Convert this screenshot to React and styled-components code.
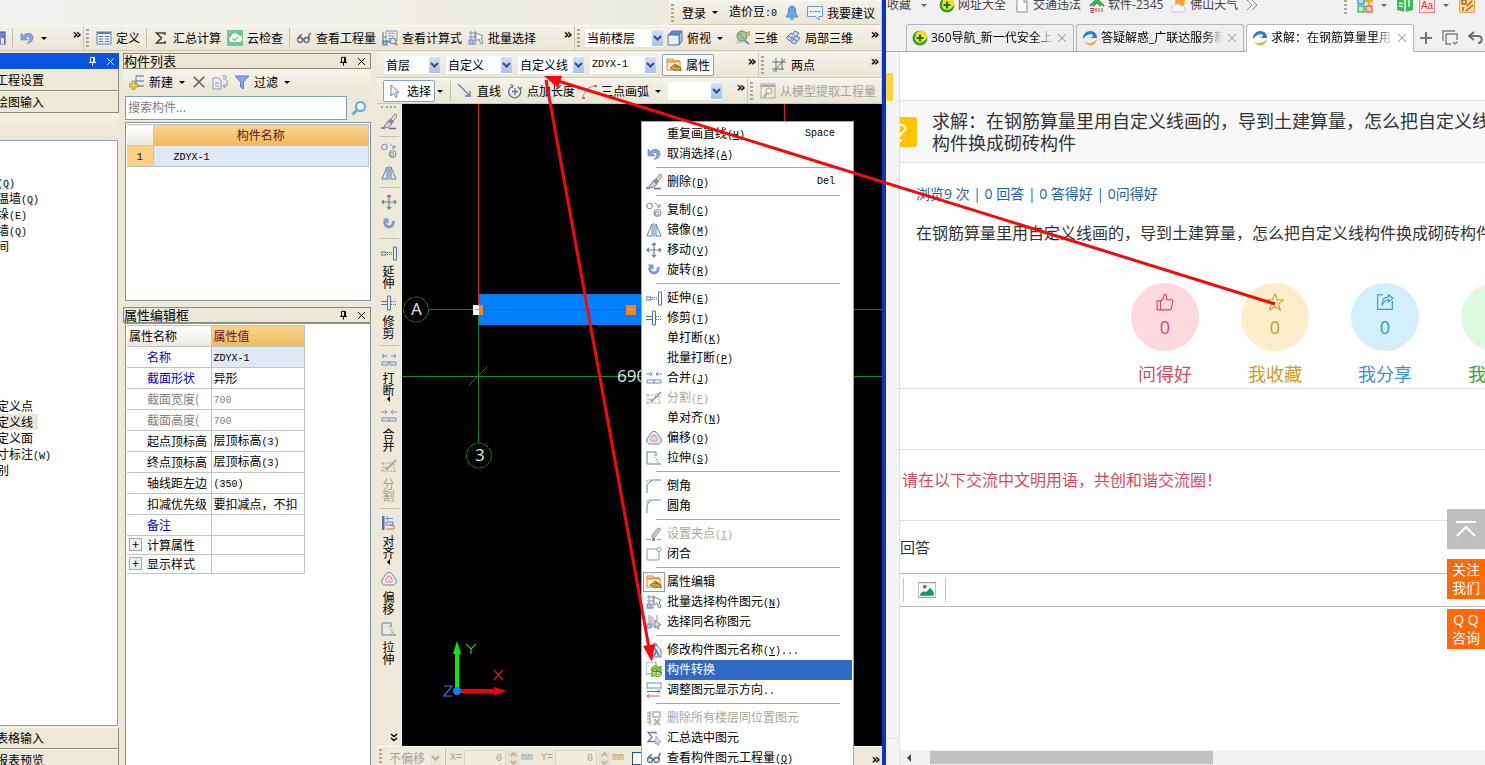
import { useState } from "react";
import styled, { createGlobalStyle } from "styled-components";

const GlobalStyle = createGlobalStyle`
  * {
    box-sizing: border-box;
  }

  body {
    margin: 0;
    overflow: hidden;
    font-family: "Noto Sans CJK SC", sans-serif;
    font-size: 12px;
    line-height: 16px;
    color: #000;
  }

  button, input, select {
    font: inherit;
    color: inherit;
    margin: 0;
    padding: 0;
    border: none;
    background: none;
    border-radius: 0;
  }
`;

const Desktop = styled.div`
  position: relative;
  display: flex;
  height: 100vh;
  overflow: hidden;
`;

// ---------- Icons (16 x 16) ----------
const blue = "#6f8fc6";
const steel = "#5a7199";

const icons = {
  save: (
    <>
      <rect x="1" y="2" width="13" height="12" fill="#7d83c9" stroke="#4d52a0" />
      <rect x="10" y="8" width="3" height="6" fill="#e4e6f7" />
    </>
  ),
  undo: (
    <path
      d="M2 3v7h7L6.600 7.600C9 5.600 11.500 7 10.500 10c-.4 1.400-1.300 2.300-2.500 3.400 4-.6 6.300-3 6.100-6C13.800 3.400 8.500 1.600 4.400 5.400z"
      fill="#86a3dc"
      stroke="#6482c0"
      strokeWidth=".6"
    />
  ),
  define: (
    <>
      <rect x="1" y="2" width="14" height="12" fill="#eef3fb" stroke="#5c7fb8" />
      <path d="M1 3h14" stroke="#5c7fb8" strokeWidth="2" />
      <path d="M3 6.500h4M3 9h4M3 11.500h4M9 6.500h4M9 9h4M9 11.500h4" stroke="#4a6ea9" />
    </>
  ),
  sigma: <path d="M12 5V3H3.500l5 5-5 5H12v-2" fill="none" stroke="#444" strokeWidth="1.600" />,
  cloud: (
    <>
      <rect width="16" height="16" fill="#72c795" />
      <path d="M4 12a3 3 0 0 1 0-5.500A4 4 0 0 1 11.500 5.500 3.200 3.200 0 0 1 12 12z" fill="#fff" />
      <path d="M5.500 8.500l2 2 3.500-3.500" fill="none" stroke="#72c795" strokeWidth="1.400" />
    </>
  ),
  glasses: (
    <g fill="none" stroke="#59687f" strokeWidth="1.300">
      <circle cx="4" cy="10" r="2.500" />
      <circle cx="10.500" cy="10" r="2.500" />
      <path d="M2 8.500C3 6 4 5 6 4.500M6.500 9.500h1.500M13 9.500V5l2-2" />
    </g>
  ),
  formula: (
    <>
      <path d="M4 1h11v10H4z" fill="#f1f1f1" stroke="#8a93a6" />
      <path d="M6 3.500h7M6 6h7M6 8.500h7M8 2v8M11 2v8" stroke="#9aa3b5" strokeDasharray="2 1" />
      <path d="M1 2v12M1 7h3M3 12h5" stroke={steel} />
      <rect x="1" y="11" width="4" height="4" fill="#a7b8e0" stroke={steel} />
      <circle cx="11" cy="11" r="3" fill="#dbe7f8" stroke={steel} />
      <path d="M13 13l2 2" stroke="#c27a3a" strokeWidth="2" />
    </>
  ),
  batch: (
    <>
      <path d="M1 3h8M1 7h8M1 11h5M3 1v13M7 1v13M1 14h7" stroke="#8793ad" fill="none" />
      <rect x="1" y="10" width="4" height="4" fill="#b5c2e6" stroke={blue} />
      <path d="M8 3l7 3-2 2 2 5-2 1-2-5-3 2z" fill="#fff" stroke="#7c86a0" />
    </>
  ),
  same: (
    <>
      <path d="M3 1v11M7 3v9M11 1v6M1 12h10" stroke="#8793ad" />
      <path d="M5 2v9" stroke="#d77" />
      <rect x="1" y="10" width="4" height="4" fill="#b5c2e6" stroke={blue} />
      <path d="M9 6l6 5-3 .4 1 3-1.500.6-1-3L9 14z" fill="#dfe4ef" stroke="#7c86a0" />
    </>
  ),
  cube: (
    <>
      <path d="M1 5l4-4h10l-3 4z" fill="#5d8cc9" stroke="#55779f" />
      <path d="M12 5l3-4v10l-3 4z" fill="#a9c8ea" stroke="#55779f" />
      <path d="M1 5h11v10H1z" fill="#e6f0fa" stroke="#55779f" />
    </>
  ),
  globe: (
    <>
      <path d="M1 14l4-6 5 5z" fill="#c9c9c9" />
      <circle cx="8" cy="6" r="5" fill="#8fcf9c" stroke="#4c9b60" />
      <path d="M5 3l5 6M11 3l4-1v4" stroke="#e08b4a" strokeWidth="1.500" fill="none" />
      <path d="M10 10l5 4" stroke="#7089b5" strokeWidth="2" />
    </>
  ),
  part3d: (
    <g fill="#c4d9ef" stroke="#57799f">
      <path d="M1 8l5-5 4 2-5 6zM6 12l5-6 4 2-5 6z" />
      <path d="M3 6l4 2M8 9l4 2M8 3l2-2 4 2-3 4" />
    </g>
  ),
  bell: (
    <>
      <path d="M8 1C5.500 1 4.500 3 4.500 6S3 10 2 12h12c-1-2-2.500-3-2.500-6S10.500 1 8 1z" fill="#6ba4e7" stroke="#4c82c4" />
      <path d="M6 13h4l-2 2.500z" fill="#4c82c4" />
    </>
  ),
  speech: (
    <>
      <path d="M.5 1.500h15v10H12v3.500L8.500 11.500h-8z" fill="#eaf2fc" stroke="#6d96cb" />
      <path d="M3 6.500h2M6 6.500h1M8 6.500h2M11 6.500h2" stroke="#4c7ab4" />
    </>
  ),
  props: (
    <>
      <path d="M1 2h6l1 2h6v9H1z" fill="#fff3d0" stroke="#d98a35" />
      <path d="M1 4.500h13" stroke="#e7963b" strokeWidth="2" />
      <path d="M4 11l5-4 2 1 4 3v3l-3-1-3 .5-2-1z" fill="#d5a93f" stroke="#715c28" strokeWidth=".8" />
      <path d="M8 10l3-1 2 2" stroke="#715c28" fill="none" />
    </>
  ),
  twoPoint: (
    <path d="M1 5h14M1 12h12M5 1v14M11 1v12M2 15L14 2" fill="none" stroke="#6b7280" />
  ),
  cursor: <path d="M4 2l8 7-3.500.5 2 4-1.800.8-2-4L4 13z" fill="#fff" stroke="#6c7fa8" />,
  line: <path d="M1 1l11 11M13 8v5H8" fill="none" stroke="#5c7fa8" strokeWidth="1.300" />,
  pointLen: (
    <g fill="none" stroke={steel} strokeWidth="1.300">
      <path d="M6 3a6 6 0 1 0 7 3M5 5L6 2.500 3.500 1.500M8 5v7M5 8.500h6M13 6l-2-2M13 6l2-2" />
    </g>
  ),
  arc: (
    <>
      <path d="M2 15C3 8 8 3 15 3" fill="none" stroke="#8b95aa" />
      <path d="M1 14h3v2H1zM5 6h3v2H5zM13 2h3v2h-3z" fill="#d46a6a" />
    </>
  ),
  model: (
    <g fill="none" stroke="#a8a698">
      <rect x="1" y="1" width="14" height="14" />
      <path d="M1 3h14" strokeWidth="2" />
      <circle cx="9" cy="8" r="3" />
      <path d="M7 10l-3 4" strokeWidth="2" />
    </g>
  ),
  eraser: (
    <>
      <path d="M10 5l4-5h1.500l.5 3-4 4z" fill="#e9e1a0" stroke="#6f6f7f" strokeWidth=".8" />
      <path d="M9 4.500l4 3-2 2.500-4-3z" fill="#7f8db0" />
      <path d="M7 7l4 3-4 4-4-1.500z" fill="#e3c6dc" stroke="#6f6f7f" strokeWidth=".8" />
      <path d="M0 14h4M8 14.500h7" stroke="#5d6b93" strokeWidth="1.300" />
    </>
  ),
  copy: (
    <g fill="none" stroke="#75839f">
      <circle cx="3.500" cy="4" r="2.800" />
      <circle cx="11.500" cy="11" r="3.500" />
      <circle cx="11" cy="11.500" r="1.800" />
      <path d="M9 1l5 4M14 2v3h-3" stroke={blue} />
    </g>
  ),
  mirror: <path d="M1 14L6 2v12zM8 1v14M15 14L10 2v12z" fill="none" stroke="#5b7cb2" />,
  move: (
    <path
      d="M8 1v14M1 8h14M6 3l2-2 2 2M6 13l2 2 2-2M3 6L1 8l2 2M13 6l2 2-2 2"
      fill="none"
      stroke="#6d7fa0"
      strokeWidth="1.200"
    />
  ),
  rotate: (
    <>
      <path d="M4 5a4.300 4.300 0 1 0 8 0" fill="none" stroke="#7b97d6" strokeWidth="3" />
      <path d="M1.500 2.500h6v5.500z" fill="#7b97d6" />
    </>
  ),
  extend: (
    <g fill="none" stroke="#4f75a8">
      <path d="M0 7h5v3H0zM12.500 2h3v13h-3z" />
      <path d="M6 7.500h6M6 9.500h6" strokeDasharray="1 1" />
    </g>
  ),
  trim: (
    <g fill="none" stroke="#4f75a8">
      <path d="M6.500 1h3v14h-3zM0 6.500h6M0 9.500h6" />
      <path d="M10 6.500h6M10 9.500h6" strokeDasharray="1 1" />
    </g>
  ),
  breakIt: (
    <g fill="none" stroke="#7189bd">
      <path d="M1 4h5M10 4h5M3 2L1 4l2 2M13 2l2 2-2 2M1 10h6v3H1zM9 10h6v3H9zM7 10h2" />
    </g>
  ),
  merge: (
    <g fill="none" stroke="#7189bd">
      <path d="M0 4h6M10 4h6M4 2l2 2-2 2M12 2l-2 2 2 2M1 10h14v3H1zM8 10v3" />
    </g>
  ),
  split: (
    <g fill="none" stroke="#aaa89c">
      <path d="M2 5h11v8H2zM0 5h2M0 13h2M13 13h3" strokeDasharray="2 1" />
      <path d="M4 9l2 2L15 2" strokeWidth="2" />
    </g>
  ),
  align: (
    <>
      <rect x="1" y="1" width="2.500" height="14" fill="#4f75a8" />
      <path d="M5 3.500h7M7 1.500l-2 2 2 2" stroke="#7189bd" fill="none" />
      <path d="M5 7h7v3H5z" stroke="#8d6bd0" fill="#e5dcfb" />
      <path d="M5 14h8v-3.500h-4" stroke="#c9773f" fill="none" />
    </>
  ),
  offset: (
    <>
      <path d="M5 3C6 1 10 1 11 3l4 6c1 3-1 5-3 5H4c-2 0-4-2-3-5z" fill="#e8ecf6" stroke="#6c7fa8" />
      <path d="M8 5c2 0 2 1.500 2.500 3 2 1 1 3-.5 3H6c-1.500 0-2.500-2-.5-3C6 6.500 6 5 8 5z" fill="#fbd6d6" stroke="#d97f86" />
    </>
  ),
  stretch: (
    <g fill="none" stroke="#5b7fb0">
      <path d="M10 2H1v12h14M10 2v4" />
      <path d="M8 5l6 9M11 9v5" strokeDasharray="1 1.500" />
    </g>
  ),
  chamfer: (
    <g fill="none" stroke="#5b86ab">
      <path d="M1 15V7l5-5h9" />
      <path d="M1 5V2h4" strokeDasharray="1 1" />
    </g>
  ),
  fillet: (
    <g fill="none" stroke="#5b86ab">
      <path d="M1 15V9c0-4 3-7 7-7h7" />
      <path d="M1 5V2h4" strokeDasharray="1 1" />
    </g>
  ),
  grip: (
    <>
      <path d="M6 9l6-7 3 1-6 8-3 1z" fill="#c9c7bf" stroke="#a3a196" />
      <path d="M0 13.500h5M11 13.500h4" stroke="#a3a196" />
      <rect x="6" y="12" width="3" height="3" fill="#8f8d83" />
    </>
  ),
  closeShape: (
    <g fill="none" stroke="#7b9cc8">
      <path d="M11 3H1v11h12V6" />
      <circle cx="13" cy="3.500" r="2" />
    </g>
  ),
  rename: (
    <>
      <path d="M4 4l6-2 5 6v7H3z" fill="#dfe7f5" stroke="#6c7fa8" />
      <path d="M8 5l5 9M8 14l3-6" stroke={steel} strokeWidth="1.500" />
      <circle cx="9" cy="2.500" r="1.500" fill="#c4d2ee" stroke={steel} />
    </>
  ),
  convert: (
    <>
      <rect x="0" y="0" width="10" height="12" fill="#fff" stroke="#7c96ca" />
      <path d="M5 8c1-5 6-5 8-2l2-2v5.500H9.500l2-2C10 6.500 8 7 7.500 9z" fill="#7cd83b" stroke="#2d7c1a" strokeWidth=".8" />
      <path d="M16 10.500c-1 5-6 5-8 2.500l-2 2V9.500h5.500l-2 2c1.500 1.500 3 1 4-1z" fill="#b9ec5d" stroke="#2d7c1a" strokeWidth=".8" />
    </>
  ),
  direction: (
    <g fill="none">
      <rect x="1" y="1" width="14" height="5" stroke="#5b94cf" />
      <path d="M1 9.500h13M12 7.500l2 2-2 2" stroke={steel} />
      <path d="M1 14h13M3 12l-2 2 2 2" stroke="#d0576d" />
    </g>
  ),
  delFloor: (
    <g fill="none" stroke="#b3b1a6">
      <path d="M4 1v14M1 3h3M1 6h3M1 9h3M1 12h3M7 2h7v5H7z" strokeWidth="1.500" />
      <path d="M8 9l6 6M14 9l-6 6" strokeWidth="2" />
    </g>
  ),
  sumSel: (
    <>
      <path d="M10 4V2.500H2L6 7l-4 4.500h7" fill="none" stroke="#5b7cb2" strokeWidth="1.300" />
      <path d="M10 6l5 6-3 .3.700 2.500-1.200.4-.8-2.500L9.500 14z" fill="#dfe4ef" stroke="#8c94aa" strokeWidth=".8" />
    </>
  ),
  add: (
    <>
      <path d="M7 2h8M7 7h8M9 12h6M7 2v10" stroke="#7d93bd" fill="none" strokeWidth="1.300" />
      <path d="M3 7h3v3h3v3H6v3H3v-3H0v-3h3z" fill="#f4cf55" stroke="#a98a2d" strokeWidth=".8" />
    </>
  ),
  remove: <path d="M2 2l12 12M14 2L2 14" stroke="#666" strokeWidth="2" />,
  docs: (
    <g fill="#eef0f6" stroke="#8b95b3">
      <path d="M1 4h6l2 3v8H1zM3 9h4M3 12h4" />
      <path d="M10 2h4v3h-3M15 6v6h-4M13 10l-2 2 2 2" fill="none" />
    </g>
  ),
  filter: <path d="M1 2h14l-5.500 6v7L6.500 13V8z" fill="#88a8e6" stroke="#5d7fc7" />,
  search: (
    <>
      <circle cx="9.500" cy="6.500" r="4.500" fill="#eaf5ff" stroke="#62aaea" strokeWidth="2" />
      <path d="M6 10l-4.500 4.500" stroke="#62aaea" strokeWidth="2.500" />
    </>
  ),
  pin: <path d="M5 2h6v7H5zM9.500 2v7M3 9.500h10M8 10v4" fill="none" stroke="currentColor" strokeWidth="1.400" />,
  close: <path d="M3 3l10 10M13 3L3 13" stroke="currentColor" strokeWidth="1.400" />,
  nav360: (
    <>
      <circle cx="8" cy="8" r="7.500" fill="#2e9e35" />
      <path d="M8 .5A7.500 7.500 0 0 1 15.500 8L12 11 3 4z" fill="#f7dc2c" />
      <circle cx="8" cy="8" r="5" fill="#f4e23a" />
      <path d="M8 4.500v7M4.500 8h7" stroke="#127a22" strokeWidth="2.200" />
    </>
  ),
  page: <path d="M3 1h7l3 3.500V15H3zM10 1v4h3" fill="#fff" stroke="#8c8c8c" />,
  house: (
    <>
      <path d="M1 9l7-7 7 7M4 9l4-4 4 4" fill="none" stroke="#2fa544" strokeWidth="1.800" />
      <path d="M1 11.500h4v2H2v2h3M7 11v4M10 11v4M13 11v4" stroke="#d43b30" fill="none" />
    </>
  ),
  weather: (
    <>
      <circle cx="9" cy="5" r="5" fill="#f8a63a" />
      <path d="M3 15a3 3 0 0 1 0-6 4 4 0 0 1 7 0 3 3 0 0 1 2 6z" fill="#f2f7fc" stroke="#b9c8d8" strokeWidth=".8" />
    </>
  ),
  apps: (
    <g strokeWidth="1.300">
      <rect x="1" y="1" width="6" height="6" fill="#b8dbff" stroke="#3a8fe0" />
      <path d="M12 0v8M8 4h8" stroke="#f1a522" strokeWidth="2.500" />
      <rect x="1" y="9" width="6" height="6" fill="#bff0cb" stroke="#35b459" />
      <rect x="9" y="9" width="6" height="6" fill="#ffc9c4" stroke="#e85a4c" />
    </g>
  ),
  book: (
    <>
      <path d="M0 2l8 1.500L16 2v11l-8 2-8-2z" fill="#3cb95b" />
      <path d="M8 3.500V15M2 6l4 .7M2 9l4 .7M12 3v7" stroke="#fff" strokeWidth="1.300" />
    </>
  ),
  dict: (
    <>
      <rect x=".5" y=".5" width="15" height="15" fill="#fde3e1" stroke="#e58a86" />
      <text x="8" y="12" fontSize="10" textAnchor="middle" fill="#d2413d" fontFamily="Liberation Sans">Aa</text>
    </>
  ),
  stamp: (
    <>
      <rect x=".5" y=".5" width="15" height="15" rx="1" fill="#fbd79b" stroke="#e0a04a" />
      <path d="M3 3h4v4H3zM8 9l5-5M7 14l7-6M4 10v4" stroke="#b06a20" fill="none" strokeWidth="1.500" />
    </>
  ),
  gld: (
    <>
      <path d="M1 9C0 2 10-2 14 4c1 2 1 3 1 4H6c3 0 5-1 5-2.500C10 3 4 4 1 9z" fill="#2b7fd0" />
      <path d="M2 11c4 4 9 2 13-2-1 7-10 9-13 2z" fill="#f2a535" />
    </>
  ),
  windows: (
    <g fill="none" stroke="#808080" strokeWidth="1.400">
      <path d="M1 11V1h12M4 4h11v6M4 4v10h5M11 12l2 2 2.500-2.500" />
    </g>
  ),
  back: <path d="M6 2L1 6l5 4M1 6h9c5 0 5 7 0 7" fill="none" stroke="#707070" strokeWidth="2" />,
  photo: (
    <>
      <rect x="0" y="1.500" width="16" height="13" fill="#fff" stroke="#8b9a94" />
      <circle cx="6" cy="5" r="1.700" fill="#d8502d" />
      <path d="M2 13V11l3-2 2 1 4-4 3 4v3z" fill="#119b62" />
    </>
  ),
  thumb: (
    <path
      d="M1 7h3v8H1zM4 7.500C6 6 7 4 7 1.500c2-1 3 1 2.300 4.500H14c1 0 1 1 .8 2l-1.300 6c-.2.700-.6 1-1.500 1H4"
      fill="none"
      stroke="currentColor"
    />
  ),
  star: (
    <path d="M8 1l2.100 4.800 5.200.5-4 3.400 1.300 5.200L8 12.200l-4.600 2.700 1.300-5.200-4-3.400 5.200-.5z" fill="none" stroke="currentColor" />
  ),
  share: (
    <path
      d="M6 1.500H1.500v13h13V7M5.500 10.500C5.500 6 7.500 3.500 11 3.500V1.500L15 4.500 11 8V6C9 6 7 8 5.500 10.500z"
      fill="none"
      stroke="currentColor"
    />
  ),
  heart: <path d="M8 14L2 8c-3-5 4-8 6-3 2-5 9-2 6 3z" fill="currentColor" />,
};

const Svg = styled.svg`
  flex: none;
  display: block;
`;

function Icon({ name, size = 16, box = "0 0 16 16", width }) {
  return (
    <Svg width={width || size} height={size} viewBox={box} aria-hidden="true">
      {icons[name]}
    </Svg>
  );
}

// ---------- Small shared parts ----------
const Mono = styled.span`
  font-family: "Liberation Mono", monospace;
  font-size: 10px;
`;

const Caret = styled.span`
  flex: none;
  width: 0;
  height: 0;
  margin: 0 4px 0 2px;
  border: 3px solid transparent;
  border-top-color: ${(props) => props.color || "#000"};
  border-bottom-width: 0;
`;

const Grip = styled.span`
  flex: none;
  width: 3px;
  height: 18px;
  margin: 0 4px 0 2px;
  background: repeating-linear-gradient(#aaa796 0 2px, transparent 2px 4px);
`;

const Divider = styled.span`
  flex: none;
  width: 1px;
  height: 20px;
  margin: 0 3px;
  background: #c3c0ae;
`;

const Push = styled.span`
  flex: 1;
`;

const MoreButton = styled.button`
  flex: none;
  align-self: flex-start;
  width: 12px;
  font-family: "DejaVu Sans", sans-serif;
  font-weight: bold;
  font-size: 14px;
  text-align: center;
  color: #000;
`;

const ToolButton = styled.button`
  flex: none;
  display: flex;
  align-items: center;
  gap: 4px;
  height: 22px;
  padding: 0 3px;
  white-space: nowrap;
  color: ${(props) => (props.disabled ? "#a5a294" : "#000")};
  border: 1px solid ${(props) => (props.$framed ? "#8ba0bd" : "transparent")};
  border-width: ${(props) => (props.$framed ? "1px" : "0")};
  border-radius: 2px;
  background: ${(props) => (props.$framed ? "#fcfcfb" : "transparent")};
`;

const EdgeButton = styled(ToolButton)`
  padding-left: 0;
`;

const ComboBox = styled.span`
  flex: none;
  display: flex;
  align-items: center;
  width: ${(props) => props.$width}px;
  height: 18px;
  background: ${(props) => (props.$disabled ? "#efece0" : "#fff")};
  color: ${(props) => (props.$disabled ? "#a5a294" : "#000")};

  select {
    flex: 1;
    min-width: 0;
    appearance: none;
    padding-left: 2px;
    height: 18px;
    line-height: 16px;
    opacity: 1;
    font-family: ${(props) => (props.$mono ? '"Liberation Mono", monospace' : "inherit")};
    font-size: ${(props) => (props.$mono ? "10px" : "12px")};
  }
`;

const ComboArrow = styled.span`
  display: flex;
  align-items: center;
  justify-content: center;
  width: 11px;
  height: 16px;
  background: ${(props) => (props.$disabled ? "#e9e6d9" : "linear-gradient(#d3e0fb, #a9c0f2)")};
`;

function Combo({ value, width, disabled, mono, label }) {
  return (
    <ComboBox $width={width} $disabled={disabled} $mono={mono}>
      <select defaultValue={value} disabled={disabled} aria-label={label}>
        <option>{value}</option>
      </select>
      <ComboArrow $disabled={disabled}>
        <Svg width="9" height="6" viewBox="0 0 9 6">
          <path d="M1 1l3.500 3.500L8 1" fill="none" stroke={disabled ? "#b5b2a4" : "#33507e"} strokeWidth="2" />
        </Svg>
      </ComboArrow>
    </ComboBox>
  );
}

// ---------- Quantity survey application ----------
const AppWindow = styled.section`
  position: relative;
  flex: 0 0 886px;
  display: flex;
  flex-direction: column;
  overflow: hidden;
  background: #ece9d8;
  border-right: 4px solid #0a35c0;
`;

const TitleRow = styled.div`
  display: flex;
  justify-content: flex-end;
  height: 25px;
  background: linear-gradient(90deg, #f1f0ee, #ebe9dc);
`;

const ToolRow = styled.div`
  display: flex;
  height: 26px;
`;

const Band = styled.div`
  display: flex;
  align-items: center;
  flex: ${(props) => (props.$width ? `0 0 ${props.$width}px` : "1")};
  min-width: 0;
  gap: ${(props) => props.$gap || 0}px;
  padding-left: ${(props) => props.$inset || 0}px;
  border-top: 1px solid #faf9f3;
  border-bottom: 1px solid #cbc8b6;
  border-right: 1px solid #cbc8b6;
  background: linear-gradient(#f4f2e9, #e9e6d5);
`;

const Body = styled.div`
  flex: 1;
  display: flex;
  min-height: 0;
  padding-top: 1px;
`;

const NavDock = styled.nav`
  flex: 0 0 119px;
  display: flex;
  flex-direction: column;
  margin: 1px 4px -6px 0;
`;

const DockTitle = styled.div`
  display: flex;
  align-items: center;
  justify-content: flex-end;
  gap: 7px;
  height: 16px;
  padding-right: 3px;
  color: ${(props) => (props.$active ? "#fff" : "#000")};
  background: ${(props) => (props.$active ? "#0a53e0" : "#ebe8d7")};
  border: ${(props) => (props.$active ? "none" : "1px solid #8b897c")};

  h2 {
    flex: 1;
    margin: 0;
    font-size: 13px;
    line-height: 14px;
    font-weight: normal;
  }

  button {
    display: flex;
  }
`;

const NavButton = styled.button`
  flex: none;
  height: 22px;
  text-align: left;
  border-top: 1px solid #fbfaf5;
  border-bottom: 1px solid #8d8b7e;
  border-right: 1px solid #8d8b7e;
  background: #ece9d8;

  span {
    display: block;
    margin-left: -4px;
  }
`;

const NavFiller = styled.div`
  flex: none;
  height: 27px;
  background: linear-gradient(#f3f1e7, #e9e6d5);
`;

const NavTree = styled.ul`
  flex: 1;
  margin: 0 1px 1px 0;
  padding: 33px 0 0;
  list-style: none;
  overflow: hidden;
  background: #fff;
  border: 1px solid #8fa2bc;
  border-left: none;

  li {
    height: 16px;
    margin-left: -3px;
    white-space: nowrap;
  }

  span.row {
    display: inline-block;
    padding-right: 5px;
    height: 16px;
  }

  span.selected {
    background: #ebe7d8;
  }
`;

const MainDock = styled.div`
  flex: 0 0 248px;
  display: flex;
  flex-direction: column;
  margin: 1px 6px 0 0;
`;

const DockTools = styled.div`
  display: flex;
  align-items: center;
  height: 26px;
  padding-left: 3px;
  background: linear-gradient(#f6f4ec, #e9e6d5);
`;

const SearchRow = styled.form`
  display: flex;
  align-items: center;
  gap: 4px;
  margin: 1px 0 2px 2px;

  input {
    width: 222px;
    height: 24px;
    padding: 0 2px 4px;
    background: #fff;
    border: 1px solid #7f9db9;
  }

  input::placeholder {
    color: #808080;
    opacity: 1;
  }
`;

const Sheet = styled.div`
  flex: ${(props) => (props.$fill ? "1" : "0 0 179px")};
  margin: 0 0 ${(props) => (props.$fill ? 0 : 6)}px 2px;
  padding: 1px;
  background: #fff;
  border: 1px solid #8296a8;
  border-bottom-width: ${(props) => (props.$fill ? 0 : 1)}px;
`;

const Table = styled.table`
  width: ${(props) => props.$width};
  table-layout: fixed;
  border-collapse: collapse;

  th,
  td {
    height: 21px;
    padding: 0 2px;
    text-align: left;
    font-weight: normal;
    line-height: 16px;
    white-space: nowrap;
    overflow: hidden;
    border: 1px solid #c3c3c3;
    border-left: none;
  }
`;

const PlainHead = styled.th`
  background: linear-gradient(#fff, #ece9dc);
`;

const GoldHead = styled.th`
  color: #6d0f2c;
  background: linear-gradient(#fbd491, #efbb5b);

  && {
    text-align: ${(props) => (props.$centered ? "center" : "left")};
  }
`;

const RowNumber = styled.th`
  background: #ffcf85;

  && {
    text-align: center;
  }
`;

const Cell = styled.td`
  color: ${(props) => (props.$muted ? "#808080" : "#000")};
  background: ${(props) => (props.$selected ? "#dfe8f6" : "#fff")};

  && {
    padding-left: ${(props) => (props.$indent ? 20 : 2)}px;
    height: ${(props) => (props.$group ? 19 : 21)}px;
  }
`;

const NameCell = styled.th`
  color: ${(props) => props.$color || "#000"};

  && {
    padding: 0 0 0 ${(props) => (props.$group ? 2 : 20)}px;
    height: ${(props) => (props.$group ? 19 : 21)}px;
  }

  button {
    width: 13px;
    height: 13px;
    margin-right: 5px;
    line-height: 10px;
    font-size: 12px;
    vertical-align: 1px;
    border: 1px solid #a9a9a9;
    background: #eee;
  }
`;

const Workspace = styled.div`
  flex: 1;
  display: flex;
  flex-direction: column;
  min-width: 0;
`;

const Stage = styled.div`
  flex: 1;
  display: flex;
  min-height: 0;
`;

const SideTools = styled.div`
  flex: 0 0 25px;
  display: flex;
  flex-direction: column;
  align-items: center;
  gap: 6px;
  padding: 2px 2px 0 0;
  background: #ece9d8;

  i {
    width: 15px;
    height: 2px;
    border-top: 2px dotted #aaa796;
  }

  hr {
    width: 20px;
    height: 1px;
    margin: 0;
    border: none;
    background: #c3c0ae;
  }
`;

const SideButton = styled.button`
  display: flex;
  flex-direction: column;
  align-items: center;
  gap: 4px;
  color: ${(props) => (props.disabled ? "#a5a294" : "#000")};

  span {
    width: 12px;
    line-height: 12px;
    overflow-wrap: anywhere;
  }
`;

const SideMore = styled.button`
  margin: auto 2px 4px auto;

  svg {
    display: block;
  }
`;

const SideCaret = styled.i`
  && {
    width: 3px;
    height: 6px;
    margin-top: -4px;
    border: 3px solid transparent;
    border-right-color: #000;
    border-left-width: 0;
  }
`;

const Canvas = styled.div`
  flex: 1;
  min-width: 0;
  overflow: hidden;
  background: #000;
`;

const StatusBar = styled.div`
  flex: none;
  display: flex;
  align-items: center;
  gap: 1px;
  height: 19px;
  padding-top: 4px;
  overflow: hidden;
  color: #a5a294;
  border-top: 1px solid #fff;
  background: #ece9d8;

  label {
    display: flex;
    align-items: center;
    gap: 2px;
    margin-right: 7px;
    font-family: "Liberation Mono", monospace;
    font-size: 10px;
  }

  input[type="text"] {
    width: 42px;
    height: 17px;
    padding-right: 3px;
    text-align: right;
    border: 1px solid #d6d3c3;
    background: #efece0;
  }

  input[type="checkbox"] {
    appearance: none;
    width: 13px;
    height: 13px;
    border: 1px solid #1c5180;
    background: #fff;
  }
`;

// ---------- Context menu ----------
const Menu = styled.div`
  position: absolute;
  left: 641px;
  top: 121px;
  width: 213px;
  padding: 2px 1px;
  background: #fff;
  border: 1px solid #aca899;
`;

const MenuItem = styled.button`
  display: flex;
  align-items: center;
  width: 100%;
  height: 20px;
  text-align: left;
  white-space: nowrap;
  color: ${(props) => (props.disabled ? "#aca899" : "#000")};
`;

const MenuIcon = styled.span`
  flex: 0 0 22px;
  display: flex;
  justify-content: center;
  align-items: center;
  height: 20px;
  background: ${(props) => (props.$framed ? "#f6f4ee" : "transparent")};
  box-shadow: ${(props) => (props.$framed ? "inset 0 0 0 1px #8b9cb5" : "none")};
`;

const MenuText = styled.span`
  flex: 1;
  display: flex;
  align-items: center;
  justify-content: space-between;
  height: 20px;
  padding: 0 17px 0 2px;
  color: ${(props) => (props.$highlighted ? "#fff" : "inherit")};
  background: ${(props) => (props.$highlighted ? "#316ac5" : "transparent")};
`;

const MenuRule = styled.hr`
  height: 1px;
  margin: 3px 12px 4px 13px;
  border: none;
  background: #aca899;
`;

const menuItems = [
  { text: "重复画直线", hot: "H", shortcut: "Space" },
  { text: "取消选择", hot: "A", icon: "undo" },
  null,
  { text: "删除", hot: "D", icon: "eraser", shortcut: "Del" },
  null,
  { text: "复制", hot: "C", icon: "copy" },
  { text: "镜像", hot: "M", icon: "mirror" },
  { text: "移动", hot: "V", icon: "move" },
  { text: "旋转", hot: "R", icon: "rotate" },
  null,
  { text: "延伸", hot: "E", icon: "extend" },
  { text: "修剪", hot: "T", icon: "trim" },
  { text: "单打断", hot: "K" },
  { text: "批量打断", hot: "P" },
  { text: "合并", hot: "J", icon: "merge" },
  { text: "分割", hot: "F", icon: "split", disabled: true },
  { text: "单对齐", hot: "N" },
  { text: "偏移", hot: "O", icon: "offset" },
  { text: "拉伸", hot: "S", icon: "stretch" },
  null,
  { text: "倒角", icon: "chamfer" },
  { text: "圆角", icon: "fillet" },
  null,
  { text: "设置夹点", hot: "I", icon: "grip", disabled: true },
  { text: "闭合", icon: "closeShape" },
  null,
  { text: "属性编辑", icon: "props", framed: true },
  { text: "批量选择构件图元", hot: "N", icon: "batch" },
  { text: "选择同名称图元", icon: "same" },
  null,
  { text: "修改构件图元名称", hot: "Y", tail: "...", icon: "rename" },
  { text: "构件转换", icon: "convert" },
  { text: "调整图元显示方向", tail: "..", icon: "direction" },
  null,
  { text: "删除所有楼层同位置图元", icon: "delFloor", disabled: true },
  { text: "汇总选中图元", icon: "sumSel" },
  { text: "查看构件图元工程量", hot: "Q", icon: "glasses" },
];

function ContextMenu() {
  const [current, setCurrent] = useState("构件转换");

  return (
    <Menu role="menu">
      {menuItems.map((item, index) =>
        item === null ? (
          <MenuRule key={index} />
        ) : (
          <MenuItem
            key={index}
            role="menuitem"
            disabled={item.disabled}
            onMouseEnter={() => setCurrent(item.text)}
          >
            <MenuIcon $framed={item.framed}>{item.icon && <Icon name={item.icon} />}</MenuIcon>
            <MenuText $highlighted={item.text === current}>
              <span>
                {item.text}
                <Mono>
                  {item.hot && (
                    <>
                      (<u>{item.hot}</u>)
                    </>
                  )}
                  {item.tail}
                </Mono>
              </span>
              {item.shortcut && <Mono>{item.shortcut}</Mono>}
            </MenuText>
          </MenuItem>
        )
      )}
    </Menu>
  );
}

const treeRows = [
  { key: "Q" },
  { text: "温墙", key: "Q" },
  { text: "垛", key: "E" },
  { text: "墙", key: "Q" },
  { text: "间" },
  ...Array(9).fill({}),
  { text: "定义点" },
  { text: "定义线", selected: true },
  { text: "定义面" },
  { text: "寸标注", key: "W" },
  { text: "别" },
];

function Navigation() {
  return (
    <NavDock>
      <DockTitle $active>
        <button aria-label="固定"><Icon name="pin" size={11} /></button>
        <button aria-label="关闭"><Icon name="close" size={11} /></button>
      </DockTitle>
      <NavButton><span>工程设置</span></NavButton>
      <NavButton><span>绘图输入</span></NavButton>
      <NavFiller />
      <NavTree>
        {treeRows.map((row, index) => (
          <li key={index}>
            <span className={row.selected ? "row selected" : "row"}>
              {row.text}
              {row.key && <Mono>({row.key})</Mono>}
            </span>
          </li>
        ))}
      </NavTree>
      <NavButton><span>表格输入</span></NavButton>
      <NavButton><span>报表预览</span></NavButton>
    </NavDock>
  );
}

const properties = [
  { name: "名称", value: <Mono>ZDYX-1</Mono>, color: "#0000c8", selected: true },
  { name: "截面形状", value: "异形", color: "#0000c8" },
  { name: "截面宽度(", value: <Mono>700</Mono>, color: "#808080", muted: true },
  { name: "截面高度(", value: <Mono>700</Mono>, color: "#808080", muted: true },
  { name: "起点顶标高", value: <>层顶标高<Mono>(3)</Mono></> },
  { name: "终点顶标高", value: <>层顶标高<Mono>(3)</Mono></> },
  { name: "轴线距左边", value: <Mono>(350)</Mono> },
  { name: "扣减优先级", value: "要扣减点，不扣" },
  { name: "备注", color: "#0000c8" },
  { name: "计算属性", group: true },
  { name: "显示样式", group: true },
];

function Components() {
  return (
    <MainDock>
      <DockTitle>
        <h2>构件列表</h2>
        <button aria-label="固定"><Icon name="pin" size={11} /></button>
        <button aria-label="关闭"><Icon name="close" size={11} /></button>
      </DockTitle>
      <DockTools>
        <ToolButton><Icon name="add" />新建<Caret /></ToolButton>
        <EdgeButton aria-label="删除"><Icon name="remove" size={14} /></EdgeButton>
        <ToolButton aria-label="复制"><Icon name="docs" /></ToolButton>
        <ToolButton><Icon name="filter" />过滤<Caret /></ToolButton>
      </DockTools>
      <SearchRow>
        <input type="text" placeholder="搜索构件..." aria-label="搜索构件" />
        <button type="button" aria-label="搜索"><Icon name="search" /></button>
      </SearchRow>
      <Sheet>
        <Table $width="100%">
          <colgroup>
            <col width="26" />
            <col />
          </colgroup>
          <thead>
            <tr>
              <PlainHead />
              <GoldHead $centered>构件名称</GoldHead>
            </tr>
          </thead>
          <tbody>
            <tr>
              <RowNumber><Mono>1</Mono></RowNumber>
              <Cell $selected $indent><Mono>ZDYX-1</Mono></Cell>
            </tr>
          </tbody>
        </Table>
      </Sheet>
      <DockTitle>
        <h2>属性编辑框</h2>
        <button aria-label="固定"><Icon name="pin" size={11} /></button>
        <button aria-label="关闭"><Icon name="close" size={11} /></button>
      </DockTitle>
      <Sheet $fill>
        <Table $width="178px">
          <colgroup>
            <col width="84" />
            <col />
          </colgroup>
          <thead>
            <tr>
              <PlainHead>属性名称</PlainHead>
              <GoldHead>属性值</GoldHead>
            </tr>
          </thead>
          <tbody>
            {properties.map((row) => (
              <tr key={row.name}>
                <NameCell $color={row.color} $group={row.group}>
                  {row.group && <button aria-label="展开">+</button>}
                  {row.name}
                </NameCell>
                <Cell $selected={row.selected} $muted={row.muted} $group={row.group}>
                  {row.value}
                </Cell>
              </tr>
            ))}
          </tbody>
        </Table>
      </Sheet>
    </MainDock>
  );
}

function Drawing() {
  return (
    <Canvas>
      <Svg width="480" height="642" fontFamily="Noto Sans, sans-serif">
        <g fill="#e01818">
          <rect x="76" y="0" width="1" height="205" />
          <rect x="382" y="0" width="1" height="40" />
          <rect x="27" y="205" width="453" height="1" />
        </g>
        <rect x="77" y="190" width="180" height="31" fill="#0080ff" />
        <rect x="76" y="205" width="180" height="1" fill="#d0203c" />
        <g fill="#128a12">
          <rect x="76" y="211" width="1" height="127" />
          <rect x="0" y="272" width="480" height="1" />
        </g>
        <g fill="none" stroke="#128a12">
          <path d="M67 281l18-18" />
          <circle cx="14" cy="205.500" r="12.500" strokeDasharray="6 1" />
          <circle cx="77" cy="351.500" r="12.500" strokeDasharray="6 1" />
        </g>
        <rect x="71" y="201" width="6" height="10" fill="#fff" />
        <rect x="77" y="201" width="4" height="10" fill="#f5841f" />
        <rect x="224" y="201" width="10" height="10" fill="#f5841f" />
        <path d="M73 205.500h7M226 205.500h7" stroke="#8fc07a" />
        <text x="9" y="211" fontSize="17" fill="#ddd">A</text>
        <text x="73" y="357" fontSize="17" fill="#ddd">3</text>
        <text x="215" y="278" fontSize="17" fill="#ddd">690</text>
        <path d="M55 586V550" stroke="#00f000" strokeWidth="4" />
        <path d="M51 550l4-13 4 13z" fill="#00f000" />
        <path d="M55 587h38" stroke="#f00000" strokeWidth="4" />
        <path d="M92 583l13 4-13 4z" fill="#f00000" />
        <circle cx="55" cy="587" r="4" fill="#0080ff" />
        <g fill="none" strokeWidth="1.200">
          <path d="M64 540l5 5 5-5M69 545v5" stroke="#35b535" />
          <path d="M92 566l9 10M101 566l-9 10" stroke="#d81c1c" />
          <path d="M42 582h8l-8 10h8" stroke="#2f7fe0" />
        </g>
      </Svg>
    </Canvas>
  );
}

const sideTools = [
  { icon: "eraser", name: "删除" },
  null,
  { icon: "copy", name: "复制" },
  { icon: "mirror", name: "镜像" },
  null,
  { icon: "move", name: "移动" },
  { icon: "rotate", name: "旋转" },
  null,
  { icon: "extend", text: "延伸" },
  { icon: "trim", text: "修剪" },
  null,
  { icon: "breakIt", text: "打断", caret: true },
  { icon: "merge", text: "合并" },
  { icon: "split", text: "分割", disabled: true },
  null,
  { icon: "align", text: "对齐", caret: true },
  { icon: "offset", text: "偏移" },
  { icon: "stretch", text: "拉伸" },
];

function Spinner() {
  return (
    <Svg width="11" height="15" viewBox="0 0 11 15">
      <path d="M0 0h11v7H0zM0 8h11v7H0z" fill="#e3e0d2" />
      <path d="M3 5l2.500-3L8 5M3 10l2.500 3L8 10" fill="none" stroke="#b0ad9f" strokeWidth="1.500" />
    </Svg>
  );
}

function QuantityApp() {
  return (
    <AppWindow>
      <TitleRow>
        <Band $width={213} $gap={1}>
          <Grip />
          <ToolButton>登录<Caret /></ToolButton>
          <ToolButton><span>造价豆<Mono>:0</Mono></span></ToolButton>
          <ToolButton aria-label="消息"><Icon name="bell" /></ToolButton>
          <ToolButton><Icon name="speech" />我要建议</ToolButton>
        </Band>
      </TitleRow>
      <ToolRow>
        <Band $width={84}>
          <EdgeButton aria-label="保存">
            <Icon name="save" box="9 0 6 16" width={6} />
          </EdgeButton>
          <Divider />
          <ToolButton aria-label="撤销"><Icon name="undo" /><Caret /></ToolButton>
          <Push />
          <MoreButton>»</MoreButton>
        </Band>
        <Band $width={491}>
          <Grip />
          <ToolButton><Icon name="define" />定义</ToolButton>
          <Divider />
          <ToolButton><Icon name="sigma" />汇总计算</ToolButton>
          <ToolButton><Icon name="cloud" />云检查</ToolButton>
          <Divider />
          <ToolButton><Icon name="glasses" />查看工程量</ToolButton>
          <ToolButton><Icon name="formula" />查看计算式</ToolButton>
          <ToolButton><Icon name="batch" />批量选择</ToolButton>
          <Push />
          <MoreButton>»</MoreButton>
        </Band>
        <Band $gap={1}>
          <Grip />
          <Combo value="当前楼层" width={78} label="楼层" />
          <ToolButton><Icon name="cube" />俯视<Caret /></ToolButton>
          <ToolButton><Icon name="globe" />三维</ToolButton>
          <ToolButton><Icon name="part3d" />局部三维</ToolButton>
          <Push />
          <MoreButton>»</MoreButton>
        </Band>
      </ToolRow>
      <Body>
        <Navigation />
        <Components />
        <Workspace>
          <ToolRow>
            <Band $width={382} $gap={6} $inset={7}>
              <Combo value="首层" width={56} label="楼层选择" />
              <Combo value="自定义" width={66} label="构件类别" />
              <Combo value="自定义线" width={66} label="构件类型" />
              <Combo value="ZDYX-1" width={66} mono label="构件" />
              <ToolButton $framed><Icon name="props" />属性</ToolButton>
              <Push />
              <MoreButton>»</MoreButton>
            </Band>
            <Band>
              <Grip />
              <ToolButton><Icon name="twoPoint" />两点</ToolButton>
              <Push />
              <MoreButton>»</MoreButton>
            </Band>
          </ToolRow>
          <ToolRow>
            <Band $width={371} $inset={6}>
              <ToolButton $framed><Icon name="cursor" />选择</ToolButton>
              <Caret />
              <Divider />
              <ToolButton><Icon name="line" />直线</ToolButton>
              <ToolButton><Icon name="pointLen" />点加长度</ToolButton>
              <ToolButton><Icon name="arc" />三点画弧<Caret /></ToolButton>
              <Combo value="" width={54} label="参数" />
              <Push />
              <MoreButton>»</MoreButton>
            </Band>
            <Band>
              <Grip />
              <ToolButton disabled><Icon name="model" />从模型提取工程量</ToolButton>
            </Band>
          </ToolRow>
          <Stage>
            <SideTools>
              <i />
              {sideTools.map((tool, index) =>
                tool === null ? (
                  <hr key={index} />
                ) : (
                  <SideButton key={index} disabled={tool.disabled} aria-label={tool.name}>
                    <Icon name={tool.icon} />
                    {tool.text && <span>{tool.text}</span>}
                    {tool.caret && <SideCaret />}
                  </SideButton>
                )
              )}
              <SideMore aria-label="更多">
                <svg width="8" height="9" viewBox="0 0 8 9">
                  <path d="M1 1l3 2.500L7 1M1 5l3 2.500L7 5" fill="none" stroke="#000" strokeWidth="1.500" />
                </svg>
              </SideMore>
            </SideTools>
            <Drawing />
          </Stage>
          <StatusBar>
            <Grip />
            <Combo value="不偏移" width={54} disabled label="偏移方式" />
            <Divider />
            <label>X=<input type="text" defaultValue="0" disabled /><Spinner />mm</label>
            <label>Y=<input type="text" defaultValue="0" disabled /><Spinner />mm</label>
            <input type="checkbox" aria-label="旋转点" />
            <Push />
            <MoreButton>»</MoreButton>
          </StatusBar>
        </Workspace>
      </Body>
      <ContextMenu />
    </AppWindow>
  );
}

// ---------- Browser window ----------
const Browser = styled.section`
  position: relative;
  flex: 1;
  min-width: 0;
  display: flex;
  flex-direction: column;
  overflow: hidden;
  font-family: "Open Sans", "Noto Sans CJK SC", sans-serif;
  color: #333;
  background: #f1f1f1;
`;

const Bookmarks = styled.div`
  display: flex;
  align-items: center;
  gap: 8px;
  height: 10px;
  margin-bottom: 14px;
  padding: 0 10px 0 1px;
  line-height: 10px;
  white-space: nowrap;

  a {
    display: flex;
    align-items: center;
    gap: 3px;
    height: 10px;
    color: #444;
    text-decoration: none;
  }
`;

const Extensions = styled.div`
  display: flex;
  align-items: center;
  gap: 6px;
`;

const Tabs = styled.div`
  display: flex;
  height: 28px;
  padding-left: 20px;
  border-bottom: 1px solid #a9a9a9;
`;

const Tab = styled.div`
  flex: 0 0 168px;
  display: flex;
  align-items: center;
  gap: 3px;
  min-width: 0;
  height: 28px;
  margin-right: 2px;
  padding: 0 5px;
  color: #000;
  background: ${(props) => (props.$active ? "#fff" : "#efefef")};
  border: 1px solid #b5b5b5;
  border-bottom-color: ${(props) => (props.$active ? "#fff" : "#a9a9a9")};
  border-radius: 3px 3px 0 0;

  span {
    flex: 1;
    min-width: 0;
    overflow: hidden;
    white-space: nowrap;
    mask-image: linear-gradient(90deg, #000 85%, transparent);
  }

  button {
    display: flex;
    color: #999;
  }
`;

const TabTools = styled.div`
  display: flex;
  align-items: center;
  gap: 10px;
  padding-left: 4px;

  button {
    display: flex;
  }
`;

const Viewport = styled.div`
  flex: 1;
  display: flex;
  min-height: 0;
`;

const Gutter = styled.div`
  flex: 0 0 14px;
  display: flex;
  flex-direction: column;
  justify-content: space-between;
  padding-top: 21px;
  background: #f3f4f5;
  border-right: 1px solid #e2e2e2;

  span {
    width: 7px;
    height: 28px;
    background: #ffd63f;
  }

  hr {
    width: 100%;
    height: 27px;
    margin: 0;
    border: none;
    border-top: 1px solid #e2e2e2;
  }
`;

const PageFrame = styled.div`
  flex: 1;
  min-width: 0;
  display: flex;
  flex-direction: column;
`;

const Page = styled.main`
  flex: 1;
  overflow: hidden;
  background: #fff;
  white-space: nowrap;
`;

const Question = styled.header`
  display: flex;
  align-items: center;
  gap: 15px;
  height: 63px;
  margin-top: 48px;
  background: #f8f8f8;
  border-top: 1px solid #e4e4e4;
  border-bottom: 1px solid #e4e4e4;

  h1 {
    margin: 0;
    font-size: 18px;
    line-height: 22px;
    font-weight: normal;
  }
`;

const Mark = styled.span`
  flex: 0 0 17px;
  height: 30px;
  text-indent: -4px;
  font-size: 26px;
  line-height: 30px;
  overflow: hidden;
  color: #fff;
  background: #ffc400;
  border-radius: 0 3px 3px 0;
`;

const Stats = styled.p`
  margin: 20px 0 0 16px;
  font-size: 14px;
  line-height: 22px;
  color: #1b65a0;
`;

const Detail = styled.p`
  margin: 16px 0 0 16px;
  font-size: 16px;
  line-height: 24px;
`;

const Actions = styled.div`
  display: flex;
  gap: 42px;
  height: 144px;
  padding: 38px 0 0 231px;
  border-bottom: 1px solid #dcdcdc;
`;

const Action = styled.button`
  flex: 0 0 68px;
  display: flex;
  flex-direction: column;
  align-items: center;
  gap: 11px;
  font-size: 18px;
  line-height: 24px;
  color: ${(props) => props.$color};

  span {
    display: flex;
    flex-direction: column;
    align-items: center;
    gap: 4px;
    width: 68px;
    height: 68px;
    padding-top: 10px;
    border-radius: 50%;
    background: ${(props) => props.$tint};
  }
`;

const Notice = styled.p`
  height: 72px;
  margin: 60px 0 0;
  padding-left: 2px;
  font-size: 16px;
  line-height: 60px;
  color: #d94a5e;
  border-top: 1px solid #e0e0e0;
  border-bottom: 1px solid #e0e0e0;
`;

const AnswerTitle = styled.h2`
  margin: 0;
  font-size: 15px;
  line-height: 52px;
  font-weight: normal;
`;

const EditorBar = styled.div`
  display: flex;
  align-items: center;
  height: 34px;
  padding-left: 3px;
  border-top: 1px solid #bbb;
  border-bottom: 1px solid #bbb;

  button {
    padding: 3px 9px 3px 14px;
    border-left: 1px solid #c4c4c4;
    border-right: 1px solid #c4c4c4;
  }
`;

const ScrollBar = styled.div`
  flex: 0 0 15px;
  display: flex;
  align-items: center;
  gap: 18px;
  padding-left: 6px;
  background: #f0f0f0;

  span {
    width: 283px;
    height: 13px;
    background: #c1c1c1;
  }
`;

const Floaters = styled.aside`
  position: absolute;
  right: 0;
  top: 509px;
  display: flex;
  flex-direction: column;
  gap: 10px;
`;

const Floater = styled.button`
  display: flex;
  align-items: center;
  justify-content: center;
  width: 38px;
  height: 40px;
  font-size: 14px;
  line-height: 18px;
  color: #fff;
  background: ${(props) => (props.$gray ? "#bfbfbf" : "#ff6a08")};
`;

const actions = [
  { icon: "thumb", text: "问得好", color: "#d94a5e", tint: "#fedae0" },
  { icon: "star", text: "我收藏", color: "#d19a2a", tint: "#feedca" },
  { icon: "share", text: "我分享", color: "#3a93cf", tint: "#d3effe" },
  { icon: "heart", text: "我感谢", color: "#35a04c", tint: "#dcf9e1" },
];

const tabs = [
  { icon: "nav360", text: "360导航_新一代安全上" },
  { icon: "gld", text: "答疑解惑_广联达服务新" },
  { icon: "gld", text: "求解：在钢筋算量里用", active: true },
];

function BrowserWindow() {
  return (
    <Browser>
      <Bookmarks>
        <a href="#fav">收藏</a>
        <Caret color="#666" />
        <a href="#nav"><Icon name="nav360" />网址大全</a>
        <a href="#traffic"><Icon name="page" />交通违法</a>
        <a href="#soft"><Icon name="house" />软件-2345</a>
        <a href="#weather"><Icon name="weather" />佛山天气</a>
        <Svg width="12" height="10" viewBox="0 0 12 10">
          <path d="M1 0l5 5-5 5M6 0l5 5-5 5" fill="none" stroke="#888" />
        </Svg>
        <Push />
        <Extensions>
          <Grip />
          <Icon name="apps" />
          <Caret color="#666" />
          <Icon name="book" />
          <Icon name="dict" />
          <Caret color="#666" />
          <Icon name="stamp" />
        </Extensions>
      </Bookmarks>
      <Tabs>
        {tabs.map((tab) => (
          <Tab key={tab.text} $active={tab.active}>
            <Icon name={tab.icon} />
            <span>{tab.text}</span>
            <button aria-label="关闭标签"><Icon name="close" size={12} /></button>
          </Tab>
        ))}
        <TabTools>
          <button aria-label="新标签">
            <Svg width="12" height="12"><path d="M6 0v12M0 6h12" stroke="#777" strokeWidth="2" /></Svg>
          </button>
          <button aria-label="窗口"><Icon name="windows" /></button>
          <button aria-label="恢复"><Icon name="back" /></button>
        </TabTools>
      </Tabs>
      <Viewport>
        <Gutter>
          <span />
          <hr />
        </Gutter>
        <PageFrame>
          <Page>
            <Question>
              <Mark>?</Mark>
              <h1>
                求解：在钢筋算量里用自定义线画的，导到土建算量，怎么把自定义线
                <br />
                构件换成砌砖构件
              </h1>
            </Question>
            <Stats>浏览9 次 | 0 回答 | 0 答得好 | 0问得好</Stats>
            <Detail>在钢筋算量里用自定义线画的，导到土建算量，怎么把自定义线构件换成砌砖构件</Detail>
            <Actions>
              {actions.map((action) => (
                <Action key={action.text} $color={action.color} $tint={action.tint}>
                  <span>
                    <Icon name={action.icon} size={18} />
                    0
                  </span>
                  {action.text}
                </Action>
              ))}
            </Actions>
            <Notice>请在以下交流中文明用语，共创和谐交流圈！</Notice>
            <AnswerTitle>回答</AnswerTitle>
            <EditorBar>
              <button aria-label="插入图片"><Icon name="photo" size={18} /></button>
            </EditorBar>
          </Page>
          <ScrollBar>
            <Svg width="6" height="8"><path d="M5 0v8L1 4z" fill="#444" /></Svg>
            <span />
          </ScrollBar>
        </PageFrame>
      </Viewport>
      <Floaters>
        <Floater $gray aria-label="返回顶部">
          <Svg width="22" height="18" viewBox="0 0 22 18">
            <path d="M1 2h20M2 16l9-9 9 9" fill="none" stroke="#fff" strokeWidth="2" />
          </Svg>
        </Floater>
        <Floater>关注<br />我们</Floater>
        <Floater>Q Q<br />咨询</Floater>
      </Floaters>
    </Browser>
  );
}

// Red guide arrows drawn over both windows
const Arrows = styled.svg`
  position: absolute;
  inset: 0;
  width: 100%;
  height: 100%;
  pointer-events: none;
`;

function App() {
  return (
    <Desktop>
      <GlobalStyle />
      <QuantityApp />
      <BrowserWindow />
      <Arrows>
        <path d="M1275 304L555 80M546 80L649 648" stroke="#f80808" strokeWidth="3" fill="none" />
        <path d="M544 76l18 0-4 12zM652 662l-9-16 12-2z" fill="#f80808" />
      </Arrows>
    </Desktop>
  );
}

export default App;
